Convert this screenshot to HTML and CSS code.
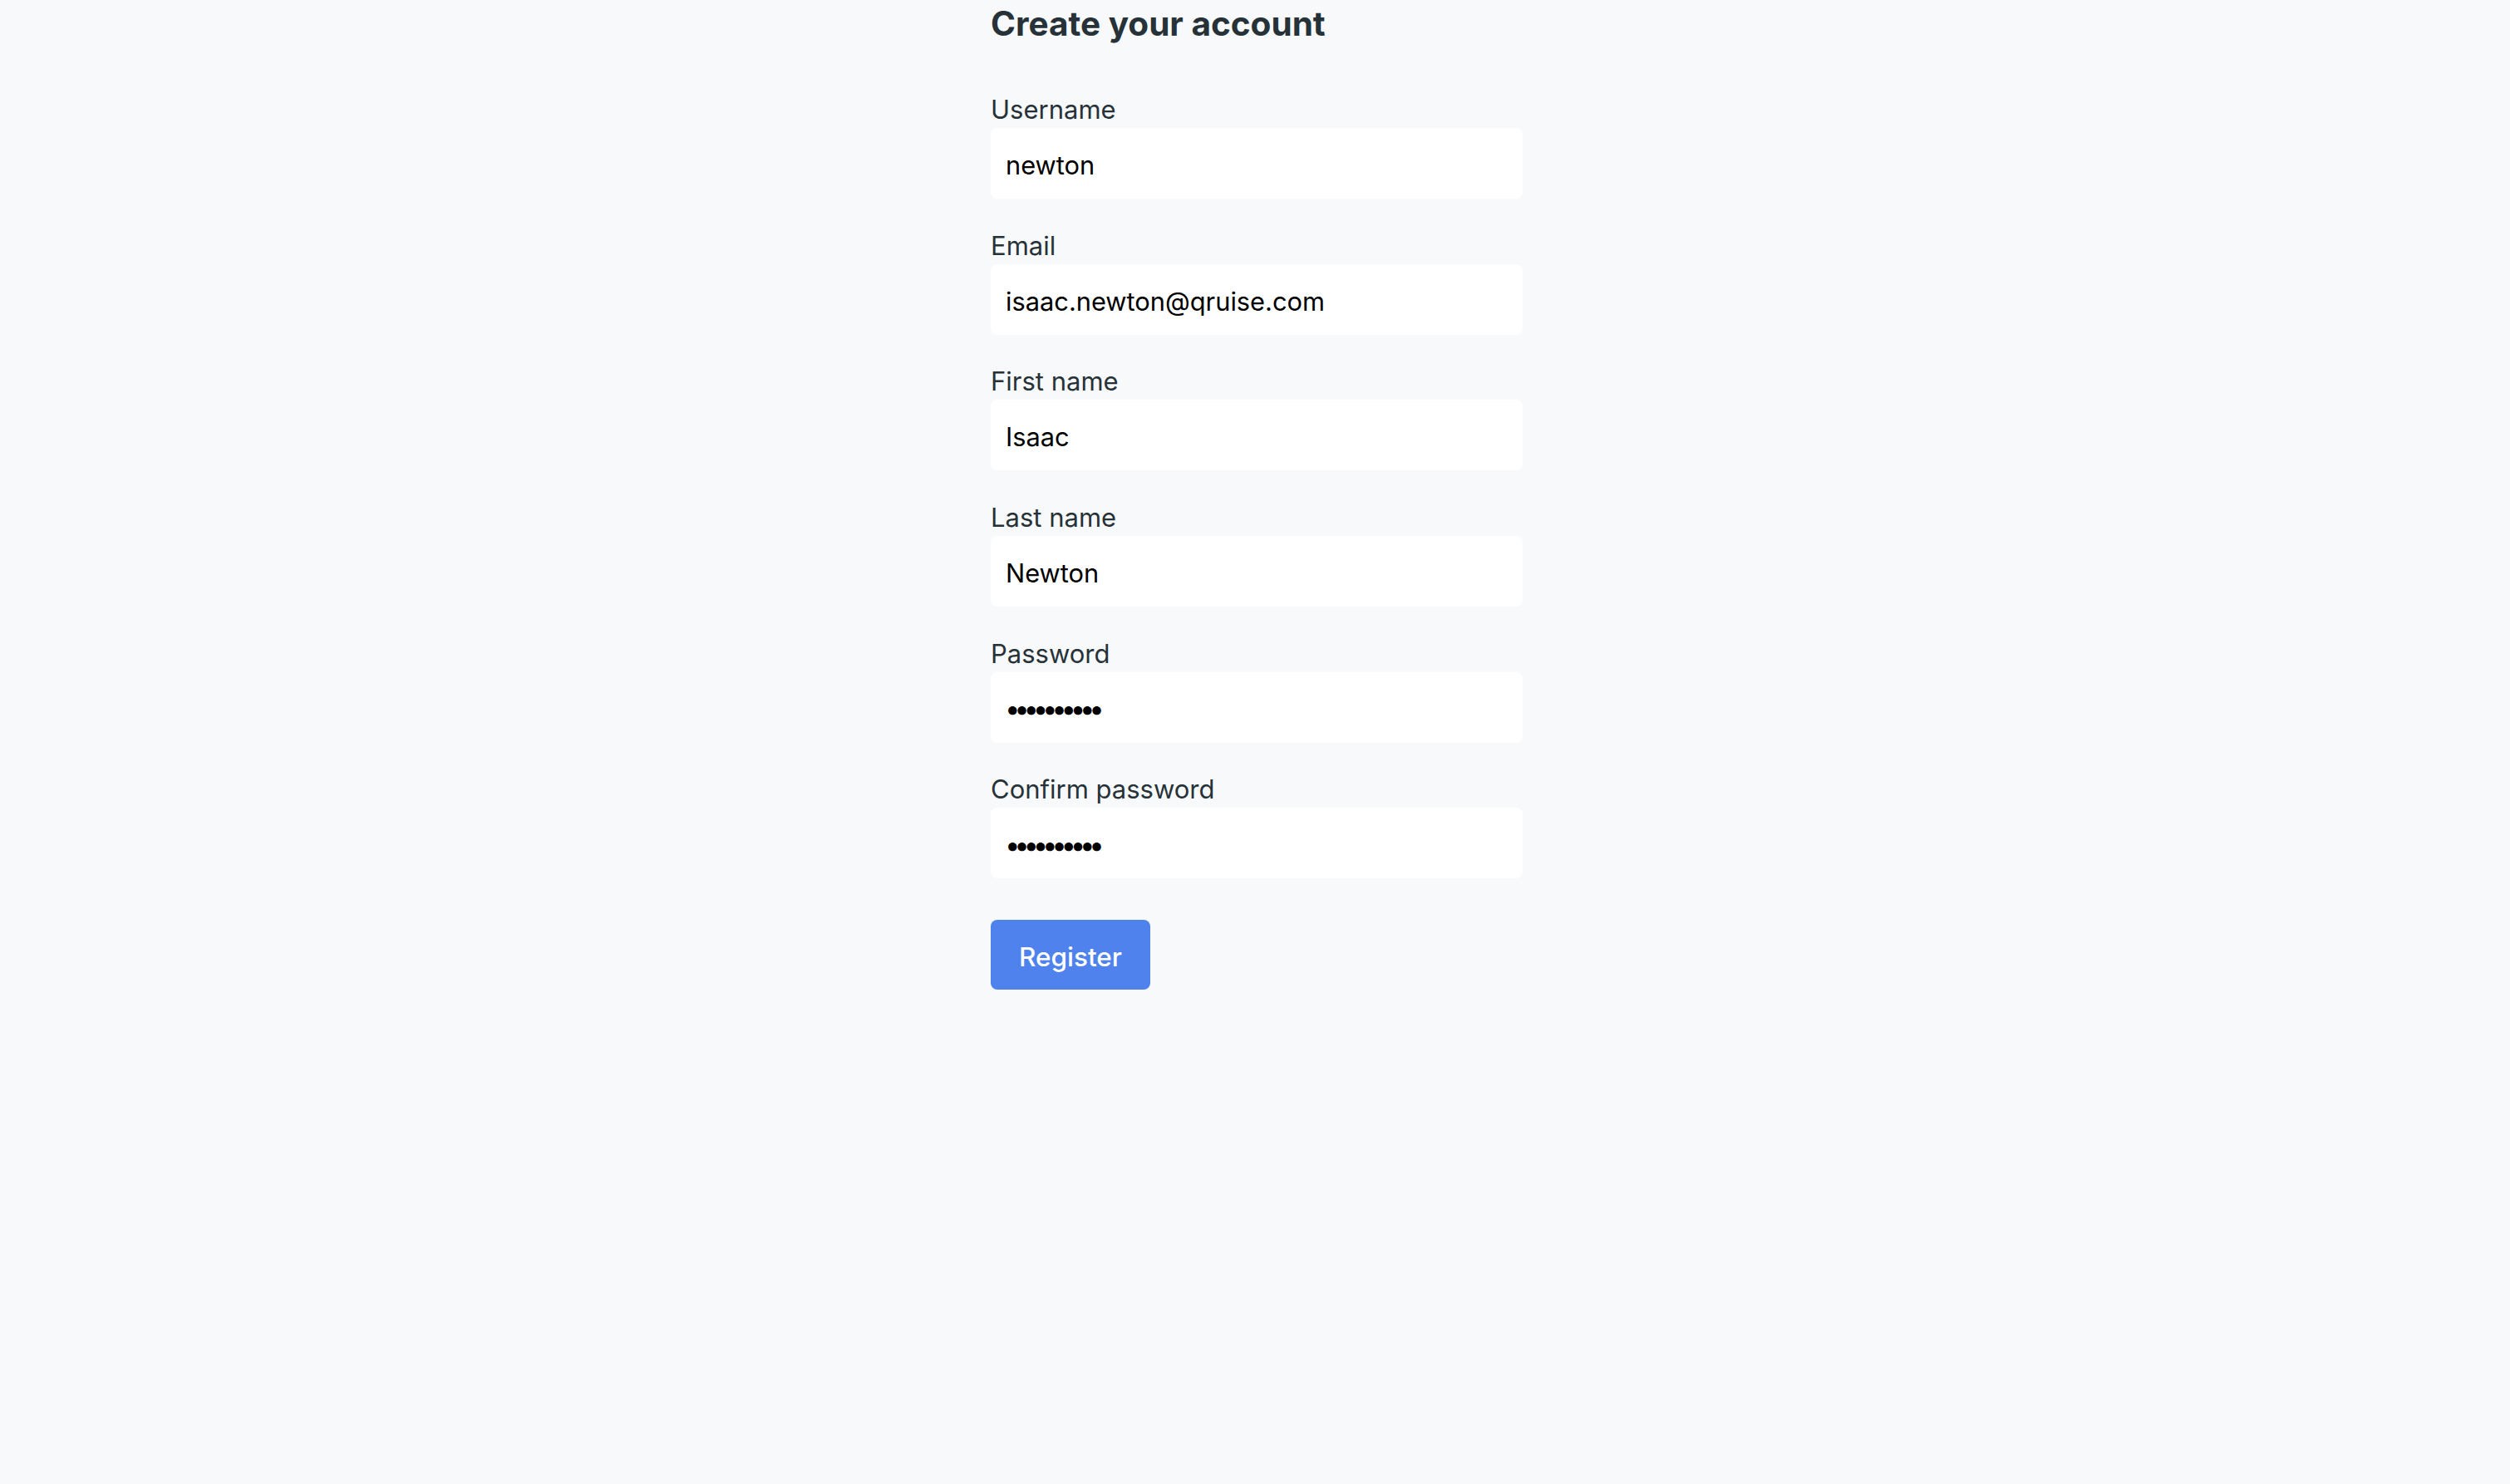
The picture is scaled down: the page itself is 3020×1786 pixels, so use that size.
FILE: index.html
```html
<!DOCTYPE html>
<html lang="en">
<head>
<meta charset="utf-8">
<title>Create your account</title>
<link rel="stylesheet" href="styles.css">
</head>
<body>
<main class="page">
  <form class="register-form" onsubmit="return false">
    <h1 class="title">Create your account</h1>
    <div class="field">
      <label class="label" for="username">Username</label>
      <input class="input" id="username" type="text" value="newton">
    </div>
    <div class="field">
      <label class="label" for="email">Email</label>
      <input class="input" id="email" type="email" value="isaac.newton@qruise.com">
    </div>
    <div class="field">
      <label class="label" for="first">First name</label>
      <input class="input" id="first" type="text" value="Isaac">
    </div>
    <div class="field">
      <label class="label" for="last">Last name</label>
      <input class="input" id="last" type="text" value="Newton">
    </div>
    <div class="field">
      <label class="label" for="password">Password</label>
      <input class="input input-secret" id="password" type="password" value="0123456789">
    </div>
    <div class="field">
      <label class="label" for="confirm">Confirm password</label>
      <input class="input input-secret" id="confirm" type="password" value="0123456789">
    </div>
    <button class="button" type="submit">Register</button>
  </form>
</main>
</body>
</html>
```

FILE: styles.css
```css
html, body {
  margin: 0;
  padding: 0;
  background: #f8f9fb;
}

body {
  padding-left: 4px;
  min-height: 1786px;
  font-family: Inter, "Liberation Sans", sans-serif;
  color: #263238;
}

.page {
  width: 640px;
  margin: 0 auto;
}

.register-form {
  display: flex;
  flex-direction: column;
}

.title {
  margin: 0 0 50px 0;
  padding-top: 2px;
  height: 54px;
  font-size: 40.5px;
  line-height: 54px;
  font-weight: 700;
  color: #263238;
}

.field {
  display: flex;
  flex-direction: column;
  margin-bottom: 30.7px;
}

.label {
  box-sizing: border-box;
  height: 48px;
  padding-top: 4px;
  font-size: 31px;
  line-height: 44px;
  font-weight: 400;
  color: #263238;
}

.input {
  box-sizing: border-box;
  height: 85px;
  width: 100%;
  border: none;
  border-radius: 8px;
  background: #ffffff;
  padding: 4px 20px 0 18px;
  font-family: Inter, "Liberation Sans", sans-serif;
  font-size: 30.8px;
  color: #000000;
  outline: none;
}

.input-secret {
  letter-spacing: -7.3px;
  padding-left: 17px;
  font-size: 33px;
}

.button {
  align-self: flex-start;
  margin-top: 19px;
  box-sizing: border-box;
  height: 84px;
  width: 192px;
  border: none;
  border-radius: 8px;
  background: #4f82ec;
  color: #ffffff;
  font-family: Inter, "Liberation Sans", sans-serif;
  font-size: 31.5px;
  font-weight: 500;
  padding: 4px 0 0 0;
  cursor: pointer;
}
```
